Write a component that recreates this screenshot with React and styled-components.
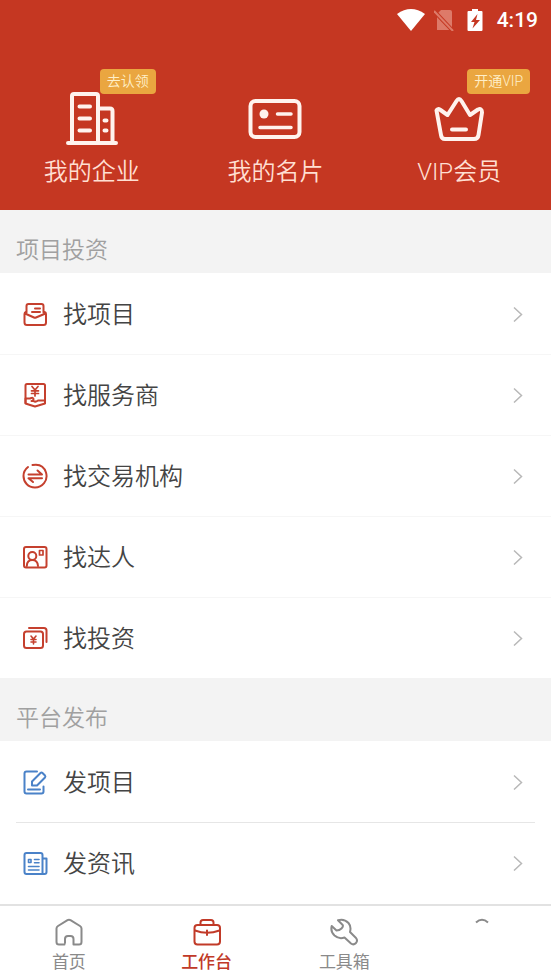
import { useState } from "react";
import styled, { createGlobalStyle } from "styled-components";

const GlobalStyle = createGlobalStyle`
  * {
    box-sizing: border-box;
  }
  body {
    margin: 0;
    background: #fff;
    font-family: Roboto, "Noto Sans CJK SC", sans-serif;
    font-weight: 350;
    color: #444;
  }
  button {
    font: inherit;
    color: inherit;
    background: none;
    border: none;
    padding: 0;
    cursor: pointer;
  }
`;

const Page = styled.div`
  min-height: 100vh;
  display: flex;
  flex-direction: column;
`;

const Header = styled.header`
  background: #c53722;
  color: #fff;
  padding-bottom: 18px;
`;

const StatusBar = styled.div`
  display: flex;
  align-items: center;
  justify-content: flex-end;
  height: 40px;
  padding-right: 13px;
  font-family: Roboto, sans-serif;
  font-size: 21px;
  font-weight: 500;
  & svg {
    display: block;
  }
`;

const StatusIcons = styled.div`
  display: flex;
  align-items: center;
  gap: 9px;
  margin-right: 10px;
`;

const Shortcuts = styled.nav`
  display: grid;
  grid-template-columns: repeat(3, 1fr);
  padding-top: 52px;
`;

const Shortcut = styled.button`
  display: flex;
  flex-direction: column;
  align-items: center;
  gap: 6px;
  font-size: 24px;
  line-height: 40px;
  color: #ffdfd2;
`;

const ShortcutIcon = styled.span`
  position: relative;
  width: 54px;
  height: 54px;
  color: #fff3ee;
  & svg {
    display: block;
  }
`;

const Badge = styled.span`
  position: absolute;
  left: 35px;
  top: -23px;
  padding: 0 7px;
  border-radius: 4px;
  background: #eaa640;
  color: #ffefc8;
  font-size: 14px;
  line-height: 25px;
  white-space: nowrap;
`;

const SectionTitle = styled.h2`
  margin: 0;
  padding: 18px 16px 0;
  height: 63px;
  background: #f3f3f3;
  color: #a0a0a0;
  font-size: 23px;
  font-weight: 350;
  line-height: 45px;
`;

const List = styled.ul`
  list-style: none;
  margin: 0;
  padding: 0;
`;

const Item = styled.li`
  padding: 0 ${({ $inset }) => ($inset ? "16px" : "0")};
  & + & > button {
    border-top-color: ${({ $inset }) => ($inset ? "#e6e6e6" : "#f6f6f6")};
  }
`;

const ItemButton = styled.button`
  display: flex;
  align-items: center;
  gap: 15px;
  width: 100%;
  height: 81px;
  border-top: 1px solid transparent;
  padding: 0 ${({ $inset }) => ($inset ? "12px 0 6px" : "28px 0 22px")};
  font-size: 24px;
  line-height: 36px;
  text-align: left;
  & svg {
    flex: none;
  }
`;

const ItemIcon = styled.span`
  display: flex;
  color: ${({ $tone }) => ($tone === "blue" ? "#4a82c8" : "#c5402e")};
`;

const ItemLabel = styled.span`
  flex: 1;
  padding-top: 2px;
`;

const TabBar = styled.nav`
  position: sticky;
  bottom: 0;
  display: grid;
  grid-template-columns: repeat(4, 1fr);
  height: 76px;
  margin-top: auto;
  padding-top: 12px;
  background: #fff;
  border-top: 2px solid #e2e2e2;
`;

const Tab = styled.button`
  display: flex;
  flex-direction: column;
  align-items: center;
  gap: 4px;
  font-size: 17px;
  font-weight: ${({ $active }) => ($active ? 500 : 400)};
  line-height: 24px;
  color: ${({ $active }) => ($active ? "#c13a28" : "#8a8a8a")};
  & svg {
    flex: none;
  }
`;

function Icon({ size = 26, stroke = 2, children }) {
  return (
    <svg
      width={size}
      height={size}
      viewBox={`0 0 ${size} ${size}`}
      fill="none"
      stroke="currentColor"
      strokeWidth={stroke}
      strokeLinecap="round"
      strokeLinejoin="round"
      aria-hidden="true"
    >
      {children}
    </svg>
  );
}

const CompanyIcon = () => (
  <Icon size={54} stroke={4}>
    <path d="M7 50V4Q7 2 9 2H31Q33 2 33 4V50M34 16.500H45Q47.500 16.500 47.500 19V50M3 51H51" />
    <path d="M14.500 14.500H25M14.500 26.500H25M14.500 38.500H25M39.500 28.500H41.500M39.500 38.500H41.500" />
  </Icon>
);

const CardIcon = () => (
  <Icon size={54} stroke={4}>
    <rect x="2.500" y="9" width="49" height="36" rx="5" />
    <circle cx="16" cy="22" r="4.500" fill="currentColor" stroke="none" />
    <path d="M29.500 22H43M12 35.500H43" strokeWidth="3.500" />
  </Icon>
);

const CrownIcon = () => (
  <Icon size={54} stroke={4}>
    <path d="M4.500 18.500Q5.500 16 8.500 18L15.500 23L24.500 9Q27 5 29.500 9L38 23L46 17.500Q50 16 50 20.500L46.500 43Q46 47 42 47H13Q9.500 47 9 43Z" />
    <path d="M20 37.500H34" />
  </Icon>
);

const InboxIcon = () => (
  <Icon>
    <path d="M4.500 11.500V5Q4.500 3 6.500 3H19.500Q21.500 3 21.500 5V11.500" />
    <path d="M4 11Q2.500 11.500 2.500 13V21.500Q2.500 24 5 24H21.500Q24 24 24 21.500V13Q24 11.500 22.500 11M3 12.500L12 16.500Q13 17 14 16.500L23.500 12.500" />
    <path d="M13 7.500H18M10 11H18" />
  </Icon>
);

const ServiceIcon = () => (
  <Icon>
    <path d="M3.500 21V3.500Q3.500 2 5 2H21.500Q23 2 23 3.500V21M3.500 16.500H8Q11.500 15 11.500 17T9.500 19H11.500Q13.500 20.500 16 18.500H23" />
    <path d="M3.500 16.500V21.500Q8 23 13 24.500Q18 23 23 21.500V18.500" />
    <path d="M10 4.500L13 8L16 4.500M13 8V14M9.500 8.800H16.500M9.500 11.500H16.500" strokeWidth="1.700" />
  </Icon>
);

const ExchangeIcon = () => (
  <Icon>
    <path d="M10.500 2Q21 0 24 9.500C26.500 18 20 24.500 13 24.500C6 24.500 1.500 19 1.500 13Q1.500 7.500 6 4" />
    <path d="M6.500 11.500H20L15.500 7.500M20 15.200H6.500L11 19" />
  </Icon>
);

const PersonIcon = () => (
  <Icon>
    <rect x="2" y="3" width="22.500" height="20.500" rx="2" />
    <circle cx="10.300" cy="12" r="4" />
    <path d="M4.800 22Q5 16 10.300 16T16 22" />
    <rect x="17.500" y="6.500" width="3.500" height="4.500" strokeWidth="1.700" />
  </Icon>
);

const InvestIcon = () => (
  <Icon>
    <path d="M7 3H22Q24.500 3 24.500 5.500V17" />
    <rect x="2" y="6.500" width="19" height="16.500" rx="2.500" />
    <path d="M9 11L11.500 14L14 11M11.500 14V19M9 14.500H14M9 17H14" strokeWidth="1.600" />
  </Icon>
);

const ComposeIcon = () => (
  <Icon>
    <path d="M15 2.500H4.500Q2.500 2.500 2.500 4.500V22.500Q2.500 24.500 4.500 24.500H19.500Q21.500 24.500 21.500 22.500V17.500M6 20.500H18" />
    <path d="M10 16.500V12.500L18.500 4Q19.500 3 20.500 4L23 6.500Q23.800 7.500 23 8.500L15 16.500Z" />
  </Icon>
);

const NewsIcon = () => (
  <Icon>
    <path d="M20.500 24H4.500Q2.500 24 2.500 22V5Q2.500 3 4.500 3H18.500Q20.500 3 20.500 5V24H22.500Q24.500 24 24.500 22V8.500H21" />
    <path d="M6.500 9.500H9V12.500H6.500ZM12.500 9.500H17M12.500 12.800H17M6.500 16.500H17M6.500 20H17" strokeWidth="1.600" />
  </Icon>
);

const ChevronIcon = () => (
  <svg width="10" height="16" viewBox="0 0 10 16" fill="none" stroke="#b8b8b8" strokeWidth="1.500" aria-hidden="true">
    <path d="M1 1.500L8.500 8.500L1 15.500" />
  </svg>
);

const HomeIcon = () => (
  <Icon size={28}>
    <path d="M9.500 26.500H4Q1.500 26.500 1.500 24V10.500Q1.500 9 3 8L12.500 2.200Q14 1.300 15.500 2.200L25 8Q26.500 9 26.500 10.500V24Q26.500 26.500 24 26.500H18.500V21Q18.500 18 15.500 18H13Q10 18 10 21V25" />
  </Icon>
);

const BriefcaseIcon = () => (
  <Icon size={28}>
    <rect x="1.500" y="7" width="25.500" height="19.500" rx="3" />
    <path d="M7.500 7V4.500Q7.500 2 10 2H18Q20.500 2 20.500 4.500V7M2 12.500Q14 17 26.500 12.500M14 12.500V17" />
  </Icon>
);

const WrenchIcon = () => (
  <Icon size={28}>
    <path d="M8 2.300Q14 .3 18.500 5Q21.500 8.500 20 14L26 20Q28 22.500 26 25Q23.500 27.500 21 25.500L14.500 19.500Q9 21.500 4.500 17.500Q.3 13.500 1.700 8L6.500 12.500Q9.500 12.500 11.500 10.500T12.700 7Z" />
  </Icon>
);

// only the top of the head shows
const ProfileIcon = () => (
  <Icon size={28}>
    <path d="M8 4.500Q14 -1 20 4.500" strokeLinecap="butt" />
  </Icon>
);

const shortcuts = [
  { label: "我的企业", icon: <CompanyIcon />, badge: "去认领" },
  { label: "我的名片", icon: <CardIcon /> },
  { label: "VIP会员", icon: <CrownIcon />, badge: "开通VIP" },
];

const sections = [
  {
    title: "项目投资",
    tone: "red",
    items: [
      { label: "找项目", icon: <InboxIcon /> },
      { label: "找服务商", icon: <ServiceIcon /> },
      { label: "找交易机构", icon: <ExchangeIcon /> },
      { label: "找达人", icon: <PersonIcon /> },
      { label: "找投资", icon: <InvestIcon /> },
    ],
  },
  {
    title: "平台发布",
    tone: "blue",
    inset: true,
    items: [
      { label: "发项目", icon: <ComposeIcon /> },
      { label: "发资讯", icon: <NewsIcon /> },
    ],
  },
];

const tabs = [
  { id: "home", label: "首页", icon: <HomeIcon /> },
  { id: "work", label: "工作台", icon: <BriefcaseIcon /> },
  { id: "tools", label: "工具箱", icon: <WrenchIcon /> },
  { id: "profile", icon: <ProfileIcon /> },
];

function Status() {
  return (
    <StatusBar>
      <StatusIcons>
        <svg width="28" height="22" viewBox="0 0 28 22" fill="#fff" aria-hidden="true">
          <path d="M0 5Q14 -5 28 5L14 22Z" />
        </svg>
        <svg width="20" height="22" viewBox="0 0 20 22" aria-hidden="true">
          <path d="M7 1H16Q18 1 18 3V21H3V5Z" fill="#dd7a69" />
          <path d="M0 2L19 22" stroke="#c53722" strokeWidth="4" />
          <path d="M0 2L19 22" stroke="#dd7a69" strokeWidth="2" />
        </svg>
        <svg width="24" height="22" viewBox="0 0 24 22" aria-hidden="true">
          <path d="M9 0H15V2H18.500Q19.500 2 19.500 3V21Q19.500 22 18.500 22H5.500Q4.500 22 4.500 21V3Q4.500 2 5.500 2H9Z" fill="#fff" />
          <path d="M14.500 5L8 13H11.500L9.500 19.500L17 11H13Z" fill="#c53722" />
        </svg>
      </StatusIcons>
      <span>4:19</span>
    </StatusBar>
  );
}

function Section({ title, tone, inset, items }) {
  return (
    <section>
      <SectionTitle>{title}</SectionTitle>
      <List>
        {items.map((item) => (
          <Item key={item.label} $inset={inset}>
            <ItemButton $inset={inset}>
              <ItemIcon $tone={tone}>{item.icon}</ItemIcon>
              <ItemLabel>{item.label}</ItemLabel>
              <ChevronIcon />
            </ItemButton>
          </Item>
        ))}
      </List>
    </section>
  );
}

export default function App() {
  const [activeTab, setActiveTab] = useState("work");

  return (
    <Page>
      <GlobalStyle />
      <Header>
        <Status />
        <Shortcuts>
          {shortcuts.map(({ label, icon, badge }) => (
            <Shortcut key={label}>
              <ShortcutIcon>
                {icon}
                {badge && <Badge>{badge}</Badge>}
              </ShortcutIcon>
              {label}
            </Shortcut>
          ))}
        </Shortcuts>
      </Header>
      <main>
        {sections.map((section) => (
          <Section key={section.title} {...section} />
        ))}
      </main>
      <TabBar>
        {tabs.map(({ id, label, icon }) => (
          <Tab key={id} $active={id === activeTab} aria-label={label || "我的"} onClick={() => setActiveTab(id)}>
            {icon}
            {label}
          </Tab>
        ))}
      </TabBar>
    </Page>
  );
}
